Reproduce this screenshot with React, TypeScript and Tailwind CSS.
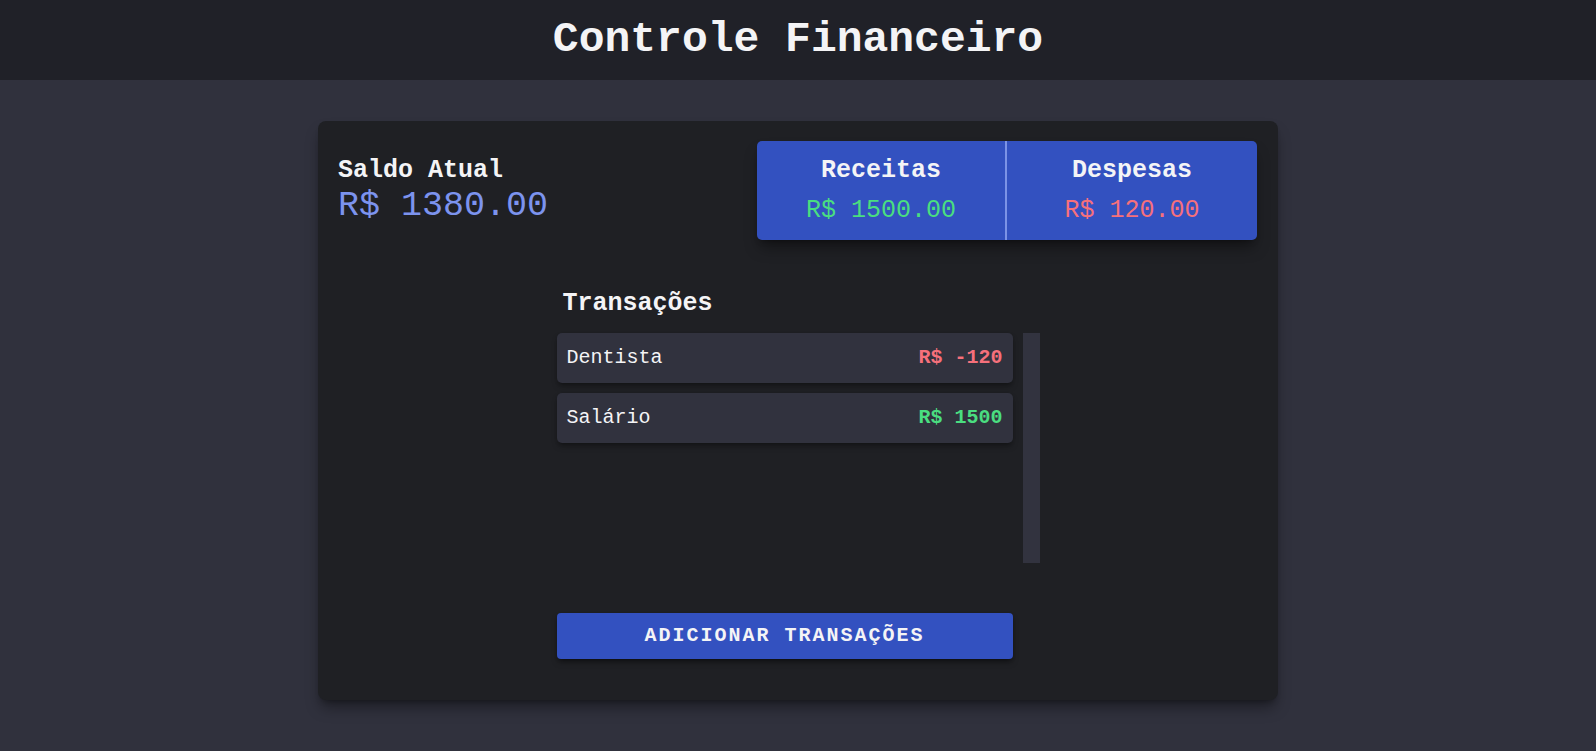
export default function App() {
  const transactions = [
    { id: 1, name: "Dentista", amount: -120 },
    { id: 2, name: "Salário", amount: 1500 },
  ];

  const income = transactions
    .filter((t) => t.amount > 0)
    .reduce((acc, t) => acc + t.amount, 0);
  const expense = transactions
    .filter((t) => t.amount < 0)
    .reduce((acc, t) => acc + Math.abs(t.amount), 0);
  const balance = income - expense;

  return (
    <div className="min-h-screen bg-[#30313d] font-['Liberation_Mono','Courier_New',monospace] text-[#f4f4f6]">
      <header className="h-[80px] bg-[#202128] flex items-center justify-center">
        <h1 className="text-[43px] leading-[50px] font-bold">Controle Financeiro</h1>
      </header>

      <main className="pt-[41px] pb-10">
        <div className="mx-auto w-[960px] bg-[#1f2024] rounded-lg shadow-lg shadow-black/40 pt-5 px-5 pb-[41px]">
          <div className="flex items-center justify-between pr-px">
            <div>
              <h2 className="text-[25px] leading-[30px] font-bold">Saldo Atual</h2>
              <p className="text-[35px] leading-[40px] text-[#7c93ee]">
                R$ {balance.toFixed(2)}
              </p>
            </div>

            <div className="flex w-[500px] bg-[#3351c0] rounded-[5px] shadow-lg shadow-black/40">
              <div className="w-[248px] pt-[15px] pb-[14px] text-center">
                <h3 className="text-[25px] leading-[30px] font-bold">Receitas</h3>
                <p className="mt-[10px] text-[25px] leading-[30px] text-[#4ade80]">
                  R$ {income.toFixed(2)}
                </p>
              </div>
              <div className="w-[2px] bg-[#7c93e6]" />
              <div className="w-[250px] pt-[15px] pb-[14px] text-center">
                <h3 className="text-[25px] leading-[30px] font-bold">Despesas</h3>
                <p className="mt-[10px] text-[25px] leading-[30px] text-[#f6707b]">
                  R$ {expense.toFixed(2)}
                </p>
              </div>
            </div>
          </div>

          <section className="mx-auto w-[483px] mt-[49px]">
            <h3 className="pl-[6px] text-[25px] leading-[30px] font-bold">Transações</h3>

            <div className="mt-[14px] h-[230px] flex gap-[10px]">
              <ul className="w-[456px] flex flex-col gap-[10px]">
                {transactions.map((t) => (
                  <li
                    key={t.id}
                    className="h-[50px] flex items-center justify-between px-[10px] bg-[#31323e] rounded-[5px] shadow-md shadow-black/30 text-[20px]"
                  >
                    <span>{t.name}</span>
                    <span
                      className={
                        t.amount < 0
                          ? "font-bold text-[#f6707b]"
                          : "font-bold text-[#4ade80]"
                      }
                    >
                      R$ {t.amount}
                    </span>
                  </li>
                ))}
              </ul>
              {/* scroll track */}
              <div className="w-[17px] bg-[#32333f]" />
            </div>

            <button className="mt-[50px] w-[456px] h-[46px] bg-[#3351c0] rounded-[4px] shadow-md shadow-black/40 text-[20px] font-bold uppercase tracking-[2px]">
              Adicionar Transações
            </button>
          </section>
        </div>
      </main>
    </div>
  );
}
